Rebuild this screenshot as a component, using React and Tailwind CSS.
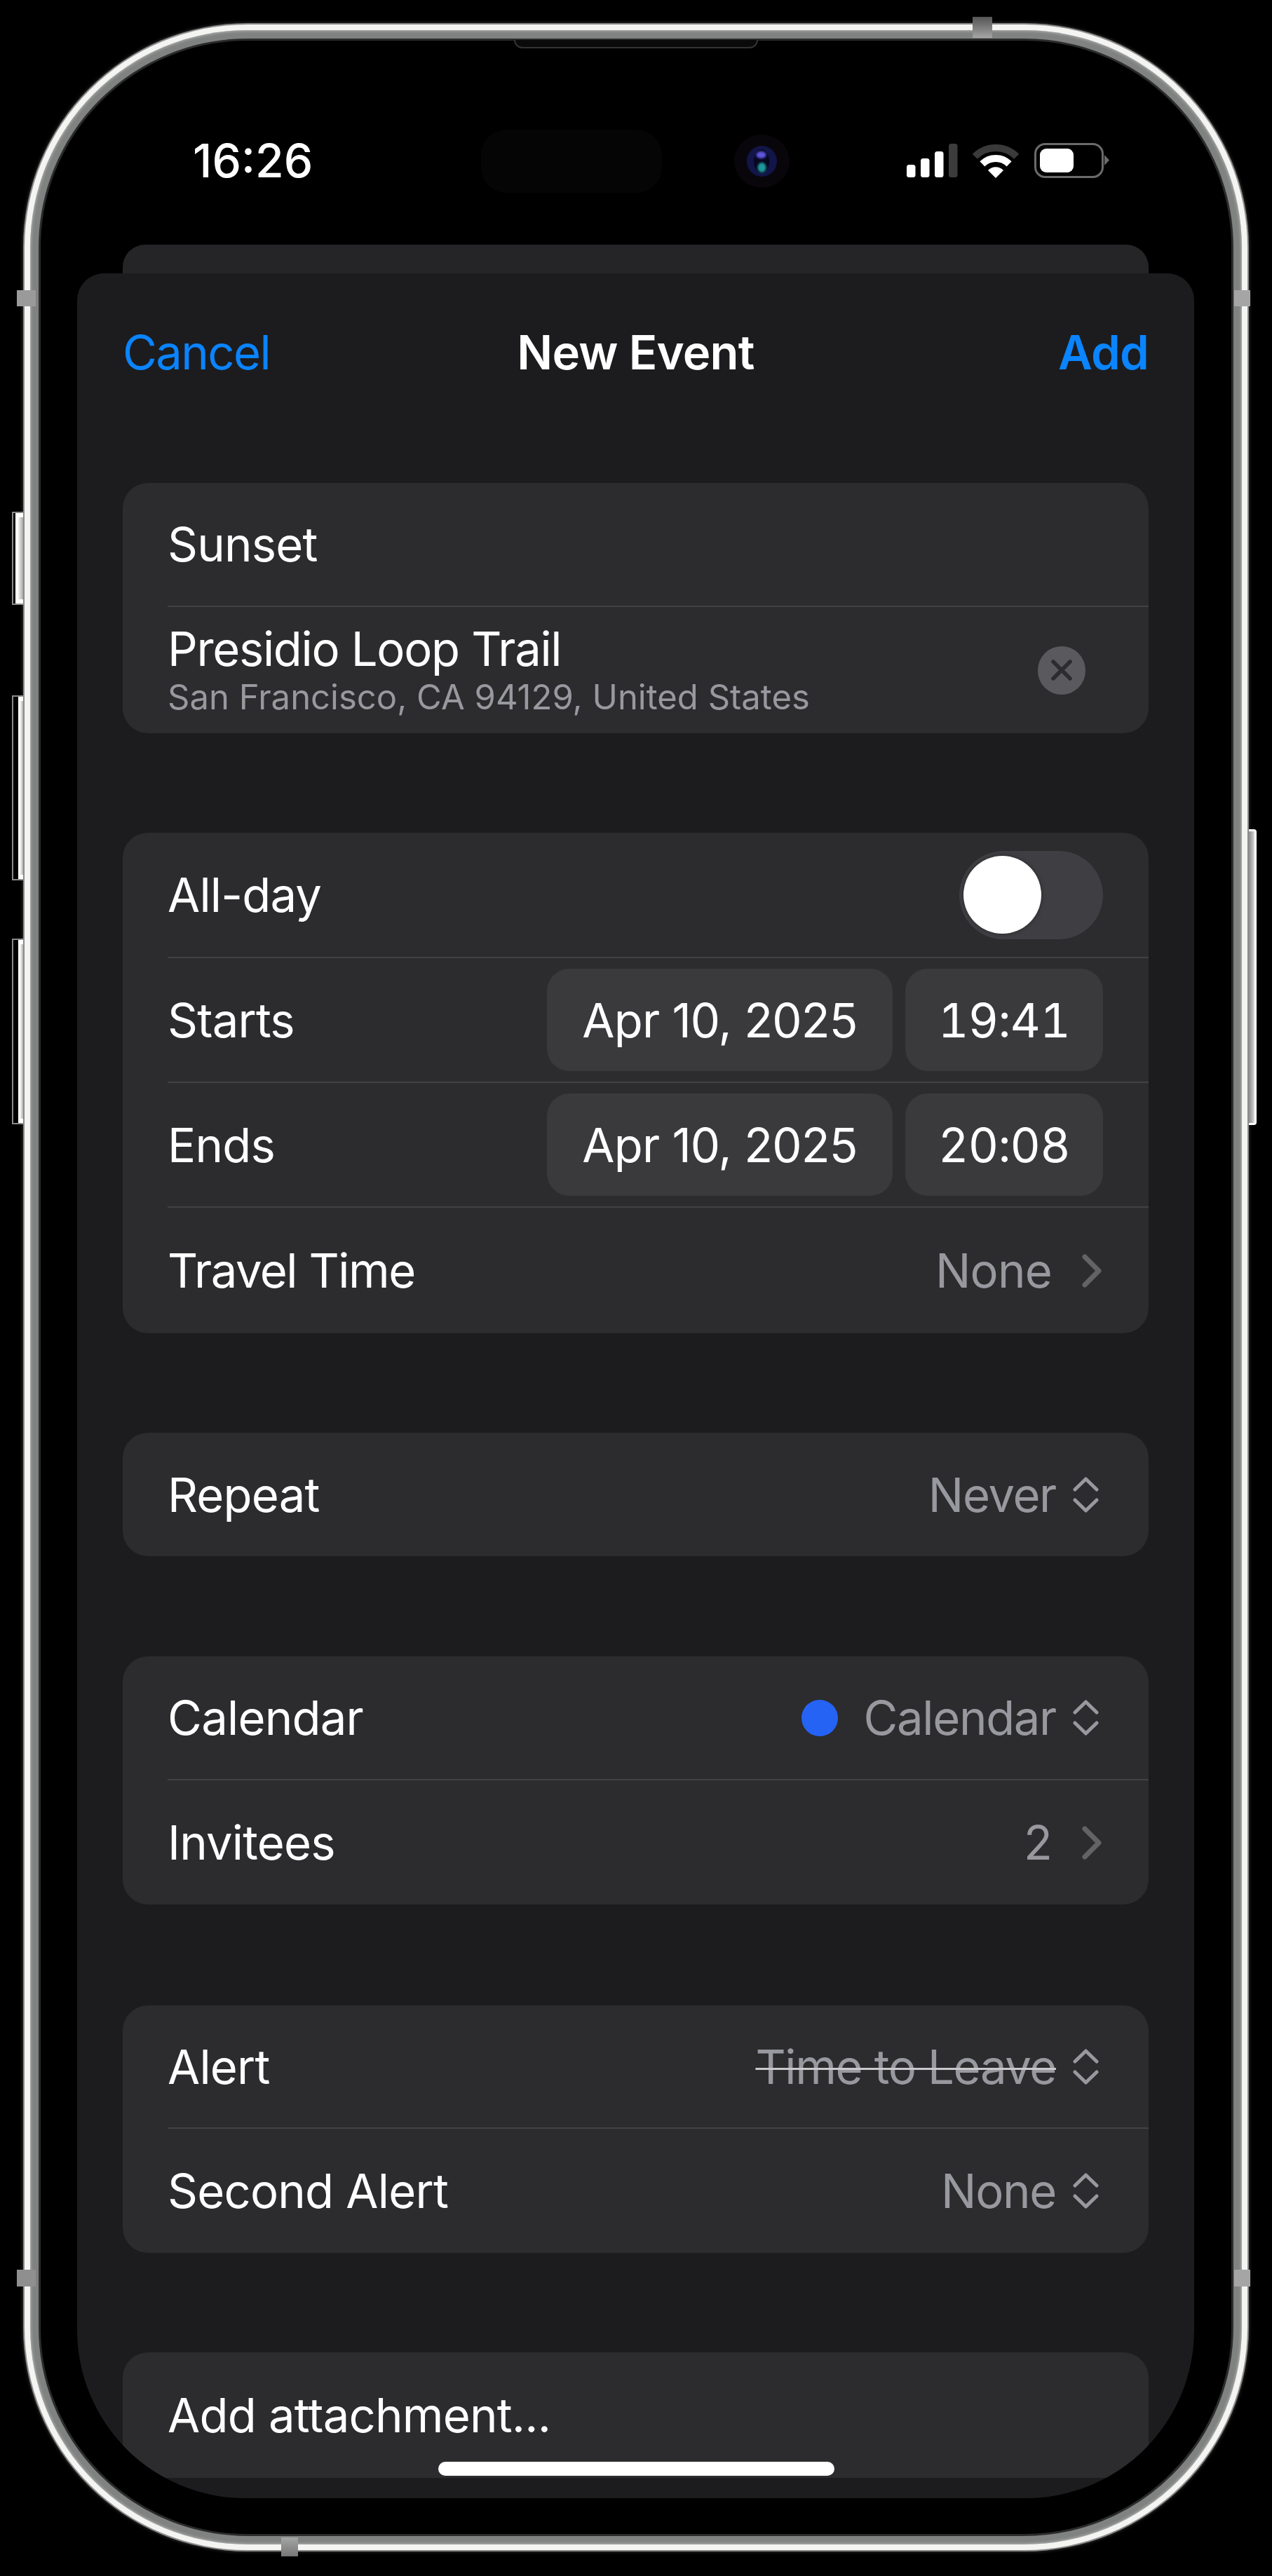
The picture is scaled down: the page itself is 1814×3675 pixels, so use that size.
const UpDown = () => (
  <svg width="37" height="53" viewBox="0 0 37 53" fill="none" stroke="#98989f" strokeWidth="5" strokeLinecap="round" strokeLinejoin="round" className="shrink-0">
    <path d="M3 19 L18.5 4 L34 19" />
    <path d="M3 34 L18.5 49 L34 34" />
  </svg>
);
const Chevron = () => (
  <svg width="29" height="50" viewBox="0 0 29 50" fill="none" stroke="#636366" strokeWidth="7" strokeLinecap="round" strokeLinejoin="round" className="shrink-0">
    <path d="M5 5 L25 25 L5 45" />
  </svg>
);
const Status = () => (
  <svg width="290" height="50" viewBox="0 0 290 50" className="shrink-0 mr-[120px]">
    <rect x="0" y="31" width="12.5" height="18" rx="3.5" fill="#fff" />
    <rect x="20" y="22" width="12.5" height="27" rx="3.5" fill="#fff" />
    <rect x="40" y="12" width="12.5" height="37" rx="3.5" fill="#fff" />
    <rect x="60" y="1" width="12.5" height="48" rx="3.5" fill="#3c3c3c" />
    <g fill="none" strokeWidth="10">
      <path d="M97.3 19.3 A42 42 0 0 1 156.7 19.3" stroke="#3a3a3a" />
      <path d="M107.9 29.9 A27 27 0 0 1 146.1 29.9" stroke="#fff" />
    </g>
    <path d="M116 39 A15 15 0 0 1 138 39 L127 50 Z" fill="#fff" />
    <rect x="183.5" y="1.5" width="96" height="47" rx="14" fill="none" stroke="#6b6b6b" strokeWidth="3" />
    <rect x="190" y="8" width="48" height="34" rx="9" fill="#fff" />
    <path d="M282 17 L289 24.5 L282 32 Z" fill="#6b6b6b" />
  </svg>
);
const Row = ({ label, right, h, last, labelCls = "" }) => (
  <div className={`ml-[64px] pr-[65px] flex items-center justify-between ${h} ${last ? "" : "border-b-2 border-[#424244]"}`}>
    <span className={`text-white pt-[1px] ${labelCls}`}>{label}</span>
    {right}
  </div>
);
const Value = ({ children, strike, cls = "" }) => (
  <span className={`text-[#98989f] pt-[1px] ${cls} ${strike ? "line-through decoration-[3px] decoration-[#c9c9cc]" : ""}`}>{children}</span>
);
const Select = ({ children, strike }) => (
  <div className="flex items-center gap-[24px] pr-[6px]">
    <Value strike={strike} cls="tracking-[-0.02em]">{children}</Value>
    <UpDown />
  </div>
);
const Link = ({ children }) => (
  <div className="flex items-center gap-[42px] pr-[2px]">
    <Value>{children}</Value>
    <Chevron />
  </div>
);
const Pills = ({ time }) => (
  <div className="flex gap-[18px] text-white">
    <div className="w-[493px] h-[146px] pt-[1px] rounded-[32px] bg-[#3a3a3c] flex items-center justify-center">Apr 10, 2025</div>
    <div className="w-[282px] h-[146px] pt-[1px] rounded-[32px] bg-[#3a3a3c] flex items-center justify-center tabular-nums">{time}</div>
  </div>
);
const Side = ({ cls, inner }) => (
  <div className={`absolute w-[17px] border-l-2 border-y-2 border-[#8a8a8a] ${cls}`}>
    <div className={`h-full border-y-[6px] border-white bg-gradient-to-r from-[#f2f2f2] via-[#c8c8c8] to-[#8f8f8f] ${inner}`} />
  </div>
);

export default function App() {
  return (
    <div className="w-[1814px] h-[3675px] bg-black pt-[33px] pl-[33px] overflow-hidden [font-family:Inter,sans-serif] text-[67px] leading-[76px] tracking-[-0.012em]">
      <div className="relative w-[1748px] h-[3607px]">
        <Side cls="left-[-16px] top-[697px] h-[133px]" inner="ml-[3px] border-l-[4px]" />
        <Side cls="left-[-16px] top-[959px] h-[264px]" inner="ml-[7px] border-l-[3px]" />
        <Side cls="left-[-16px] top-[1306px] h-[265px]" inner="ml-[7px] border-l-[3px]" />
        <div className="absolute left-[1747px] top-[1150px] w-[12px] h-[422px] border-r-[3px] border-y-[3px] border-white rounded-r-[4px] bg-gradient-to-r from-[#777] to-[#ddd]" />

        <div className="relative h-full rounded-[320px] bg-[#8b8b8b] p-[2px] shadow-[0_0_5px_rgba(255,255,255,0.25)]">
          <div className="h-full rounded-[318px] bg-[#f4f4f2] p-[8px]">
            <div className="h-full rounded-[310px] bg-[#7f8280] p-[12px] shadow-[inset_0_0_5px_rgba(255,255,255,0.6)]">
              <div className="relative h-full rounded-[298px] bg-black border-[3px] border-[#2b2b2b] pl-[52px] pr-[53px]">
                <div className="absolute left-[675px] top-[-1px] w-[348px] h-[12px] rounded-b-[12px] bg-[#0a0a0a] border-x-2 border-b-2 border-[#333]" />
                <div className="absolute left-[628px] top-[127px] w-[258px] h-[90px] rounded-[36px] bg-[#050505]" />
                <svg className="absolute left-[989px] top-[134px]" width="79" height="76" viewBox="0 0 79 76">
                  <defs>
                    <filter id="lensBlur" x="-50%" y="-50%" width="200%" height="200%">
                      <feGaussianBlur stdDeviation="1.6" />
                    </filter>
                  </defs>
                  <ellipse cx="39.5" cy="38" rx="39.5" ry="38" fill="#09060b" />
                  <ellipse cx="39.5" cy="38" rx="21.5" ry="22" fill="#121548" />
                  <ellipse cx="39" cy="38" rx="11" ry="17" fill="#06071f" />
                  <ellipse cx="38.5" cy="29" rx="7" ry="5" fill="#5f55e0" filter="url(#lensBlur)" />
                  <ellipse cx="39.5" cy="47" rx="6" ry="7" fill="#1f9a9a" filter="url(#lensBlur)" />
                </svg>

                <div className="h-[291px] flex justify-between items-start pl-[165px] pt-[146px]">
                  <span className="text-white text-[66px] leading-[50px] font-medium tracking-normal">16:26</span>
                  <Status />
                </div>

                <div className="mx-[65px] h-[41px] rounded-t-[32px] bg-[#252527]" />

                <div className="relative h-[3174px] rounded-t-[38px] rounded-b-[240px] bg-[#1c1c1e] overflow-hidden">
                  <div className="h-[226px] px-[65px] grid grid-cols-3 items-center">
                    <span className="text-[#0a84ff] tracking-[-0.024em]">Cancel</span>
                    <span className="text-white font-semibold text-center">New Event</span>
                    <span className="text-[#0a84ff] font-semibold text-right">Add</span>
                  </div>

                  <div className="mx-[65px] mt-[73px] rounded-[36px] bg-[#2c2c2e] overflow-hidden">
                    <Row label="Sunset" h="h-[177px]" />
                    <div className="ml-[64px] pr-[90px] h-[180px] flex items-center justify-between">
                      <div className="flex flex-col">
                        <span className="text-white leading-[72px] tracking-[-0.02em]">Presidio Loop Trail</span>
                        <span className="text-[#98989f] text-[49px] leading-[56px] mt-[5px] tracking-[0em]">San Francisco, CA 94129, United States</span>
                      </div>
                      <div className="w-[68px] h-[69px] rounded-full bg-[#5a5a5e] flex items-center justify-center">
                        <svg width="32" height="32" viewBox="0 0 32 32" fill="none" stroke="#2c2c2e" strokeWidth="5.5" strokeLinecap="round">
                          <path d="M4 4 L28 28 M28 4 L4 28" />
                        </svg>
                      </div>
                    </div>
                  </div>

                  <div className="mx-[65px] mt-[142px] rounded-[36px] bg-[#2c2c2e] overflow-hidden">
                    <Row
                      label="All-day"
                      h="h-[179px]"
                      right={
                        <div className="w-[205px] h-[126px] rounded-full bg-[#3f3f43] flex items-center pl-[6px]">
                          <div className="w-[111px] h-[111px] rounded-full bg-white shadow-[0_0_6px_rgba(0,0,0,0.35)]" />
                        </div>
                      }
                    />
                    <Row label="Starts" h="h-[178px]" right={<Pills time="19:41" />} />
                    <Row label="Ends" h="h-[178px]" right={<Pills time="20:08" />} />
                    <Row label="Travel Time" labelCls="tracking-[-0.022em]" h="h-[179px]" last right={<Link>None</Link>} />
                  </div>

                  <div className="mx-[65px] mt-[142px] rounded-[36px] bg-[#2c2c2e] overflow-hidden">
                    <Row label="Repeat" h="h-[176px]" last right={<Select>Never</Select>} />
                  </div>

                  <div className="mx-[65px] mt-[143px] rounded-[36px] bg-[#2c2c2e] overflow-hidden">
                    <Row
                      label="Calendar"
                      h="h-[177px]"
                      right={
                        <div className="flex items-center">
                          <div className="w-[52px] h-[52px] rounded-full bg-[#2563f5] mr-[36px]" />
                          <Select>Calendar</Select>
                        </div>
                      }
                    />
                    <Row label="Invitees" h="h-[177px]" last right={<Link>2</Link>} />
                  </div>

                  <div className="mx-[65px] mt-[144px] rounded-[36px] bg-[#2c2c2e] overflow-hidden">
                    <Row label="Alert" h="h-[176px]" right={<Select strike>Time to Leave</Select>} />
                    <Row label="Second Alert" h="h-[177px]" last right={<Select>None</Select>} />
                  </div>

                  <div className="mx-[65px] mt-[142px] rounded-[36px] bg-[#2c2c2e] overflow-hidden">
                    <Row label="Add attachment..." h="h-[179px]" last />
                  </div>

                  <div className="absolute left-[515px] top-[3122px] w-[565px] h-[20px] rounded-full bg-white" />
                </div>
              </div>
            </div>
          </div>
        </div>

        <div className="absolute left-[-9px] top-[381px] w-[27px] h-[23px] bg-[#9a9a9a]" />
        <div className="absolute left-[-9px] top-[3205px] w-[27px] h-[24px] bg-[#8f8f8f]" />
        <div className="absolute left-[1727px] top-[381px] w-[23px] h-[23px] bg-[#a5a5a5]" />
        <div className="absolute left-[1727px] top-[3205px] w-[23px] h-[24px] bg-[#a5a5a5]" />
        <div className="absolute left-[1354px] top-[-9px] w-[28px] h-[30px] bg-gradient-to-b from-[#555] to-[#a5a5a5]" />
        <div className="absolute left-[368px] top-[3587px] w-[24px] h-[27px] bg-gradient-to-b from-[#a5a5a5] to-[#777]" />
      </div>
    </div>
  );
}
